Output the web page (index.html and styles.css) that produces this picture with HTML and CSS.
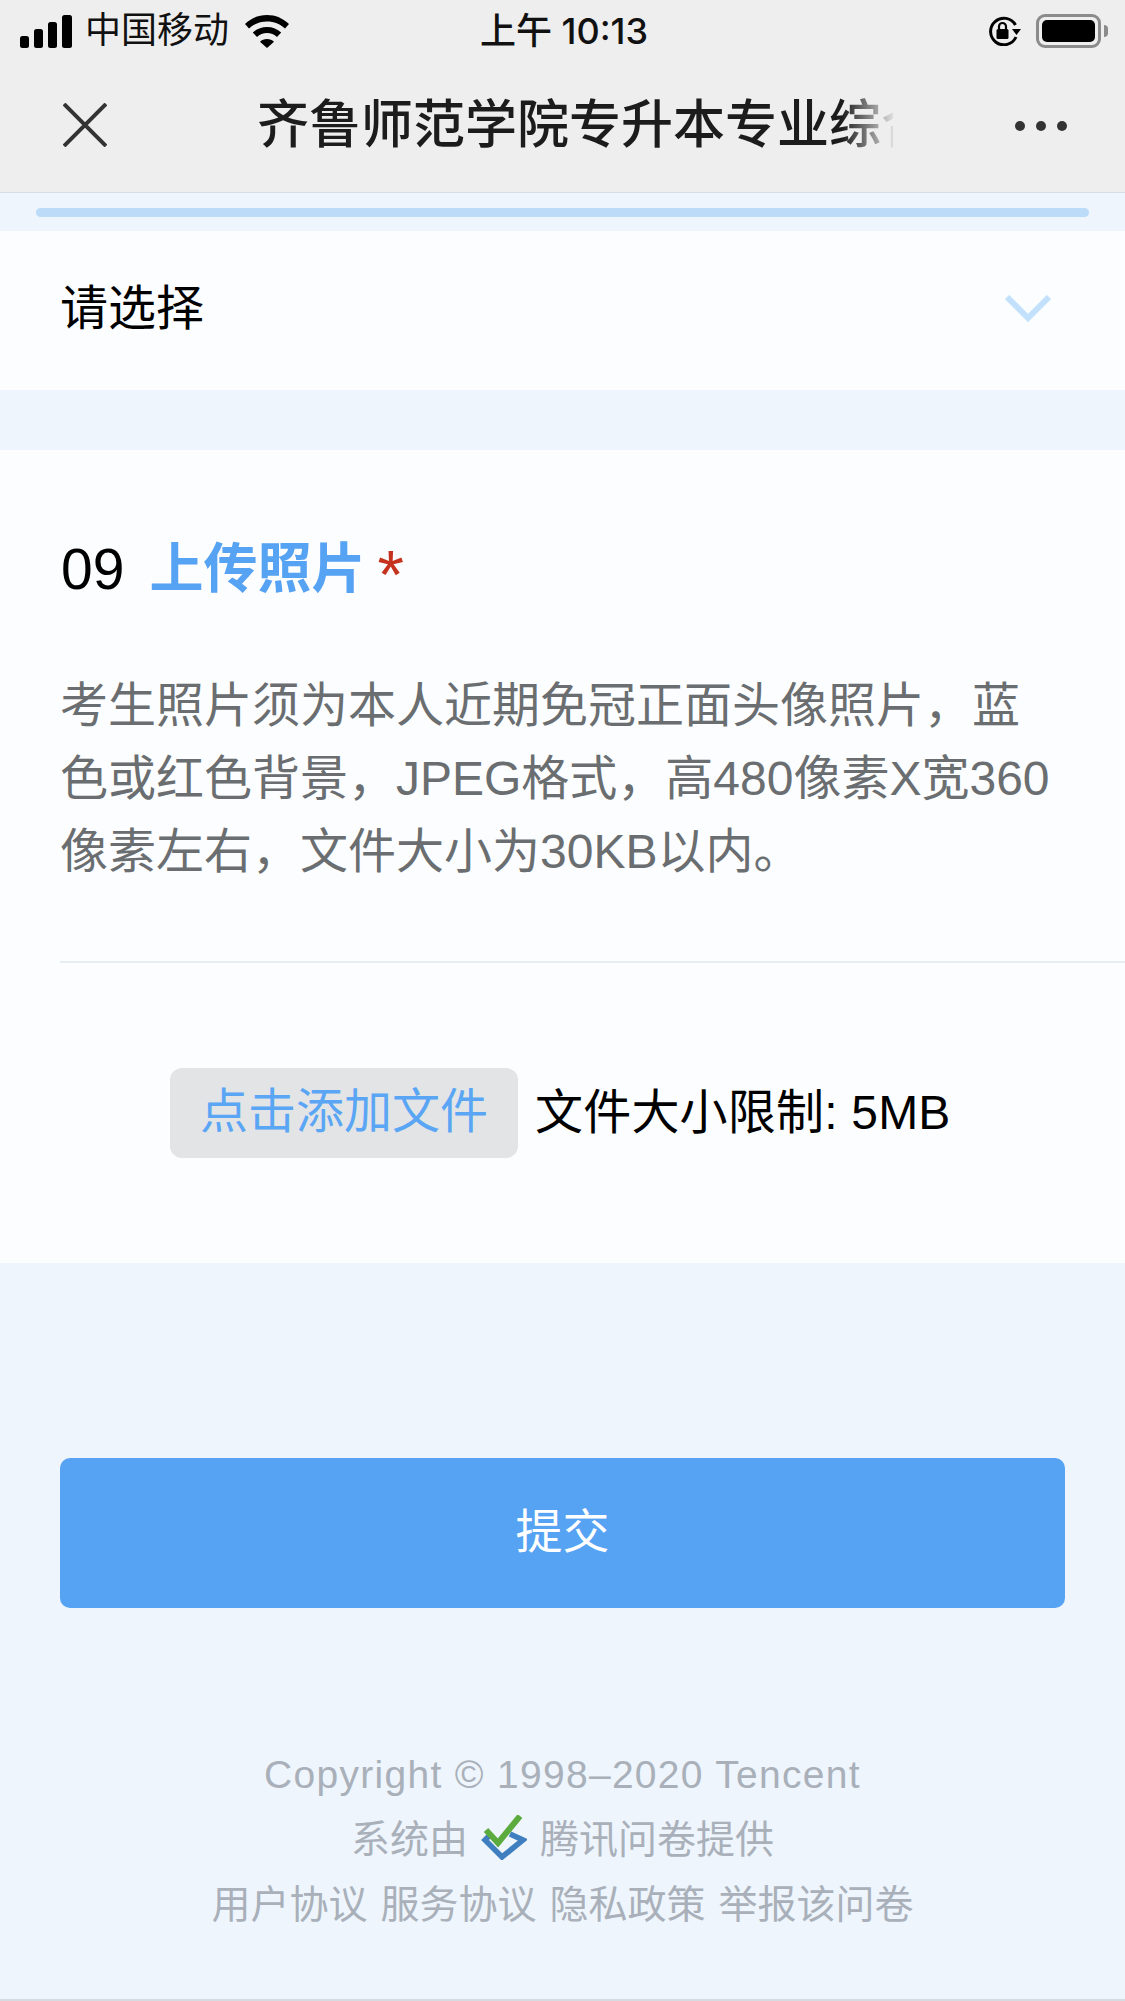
FILE: index.html
```html
<!DOCTYPE html>
<html lang="zh-CN">
<head>
<meta charset="utf-8">
<title>齐鲁师范学院专升本专业综合</title>
<link rel="stylesheet" href="styles.css">
</head>
<body>
<header class="chrome">
  <div class="status">
    <div class="status-left">
      <svg class="signal" viewBox="0 0 52 33" aria-hidden="true"><rect x="0" y="21" width="9" height="12" rx="2.5"/><rect x="14" y="14" width="9" height="19" rx="2.5"/><rect x="28" y="7" width="9" height="26" rx="2.5"/><rect x="42" y="0" width="10" height="33" rx="2.5"/></svg>
      <span class="carrier">中国移动</span>
      <svg class="wifi" viewBox="0 0 44 33" aria-hidden="true"><path d="M22 0C13.500 0 6 3.300 0 9l4 4.500C9 9 15 6.500 22 6.500S35 9 40 13.500L44 9C38 3.300 30.500 0 22 0Z"/><path d="M22 12c-5.500 0-10.500 2-14.200 5.500l4.200 4.500c2.700-2.500 6.200-4 10-4s7.300 1.500 10 4l4.200-4.500C32.500 14 27.500 12 22 12Z"/><path d="M22 24c-2.800 0-5.200 1-7 2.700L22 33l7-6.300C27.200 25 24.800 24 22 24Z"/></svg>
    </div>
    <div class="time">上午 10:13</div>
    <div class="status-right">
      <svg class="lock" viewBox="0 0 34 30" aria-hidden="true"><path class="lock-ring" d="M27.500 9A13.300 13.300 0 1 0 28 21"/><path d="M24 13h9l-4.500 6z"/><rect x="8.500" y="13" width="12" height="10" rx="1.500"/><path class="lock-hoop" d="M11 13v-2.500a3.500 3.500 0 0 1 7 0V13"/></svg>
      <div class="battery"><div class="battery-fill"></div></div>
      <div class="battery-nub"></div>
    </div>
  </div>
  <nav class="nav">
    <svg class="close" viewBox="0 0 44 44" aria-hidden="true"><path d="M1 1l42 42M43 1L1 43"/></svg>
    <div class="nav-title">齐鲁师范学院专升本专业综合</div>
    <svg class="more" viewBox="0 0 52 10" aria-hidden="true"><circle cx="5" cy="5" r="5"/><circle cx="26" cy="5" r="5"/><circle cx="47" cy="5" r="5"/></svg>
  </nav>
</header>

<div class="progress"><div class="progress-bar"></div></div>

<section class="select-row">
  <span>请选择</span>
  <svg class="chevron" viewBox="0 0 46 27" aria-hidden="true"><path d="M2 2l21 21L44 2"/></svg>
</section>

<section class="question">
  <h2 class="q-title"><span class="q-num">09</span><span class="q-name">上传照片</span><span class="q-req">*</span></h2>
  <p class="q-desc">考生照片须为本人近期免冠正面头像照片，蓝色或红色背景，JPEG格式，高480像素X宽360像素左右，文件大小为30KB以内。</p>
  <div class="q-rule"></div>
  <div class="upload">
    <div class="upload-btn">点击添加文件</div>
    <div class="upload-note">文件大小限制: 5MB</div>
  </div>
</section>

<div class="submit-wrap"><div class="submit">提交</div></div>

<footer class="footer">
  <div class="foot-line foot-copy">Copyright © 1998–2020 Tencent</div>
  <div class="foot-line foot-brand">系统由
    <svg class="logo" viewBox="0 0 46 45" aria-hidden="true"><path class="logo-blue" d="M9 20L4 25l17 17L42 25l-13-6"/><path class="logo-green" d="M5 15l12 13L39 1"/></svg>
    腾讯问卷提供</div>
  <div class="foot-line foot-links"><span>用户协议</span><span>服务协议</span><span>隐私政策</span><span>举报该问卷</span></div>
</footer>
</body>
</html>
```
FILE: styles.css
```css
* { box-sizing: border-box; }
html, body { margin: 0; padding: 0; }
body {
  width: 1125px;
  height: 2001px;
  overflow: hidden;
  background: #eef5fd;
  border-bottom: 2px solid #d5dbe1;
  font-family: "Liberation Sans", "Noto Sans CJK SC", sans-serif;
  color: #000;
}
.chrome {
  height: 193px;
  background: #eeeeee;
  border-bottom: 1px solid #d5dde5;
  color: #111;
}
.status {
  height: 62px;
  display: grid;
  grid-template-columns: 1fr auto 1fr;
  align-items: center;
  padding: 0 17px 0 20px;
}
.status-left { display: flex; align-items: center; }
.signal { width: 52px; height: 33px; fill: #000; }
.carrier { font-size: 36px; margin-left: 13px; line-height: 44px; }
.wifi { width: 44px; height: 33px; fill: #000; margin-left: 16px; }
.time { font-family: Inter, "Noto Sans CJK SC", sans-serif; font-size: 36px; font-weight: 500; line-height: 44px; }
.status-right { display: flex; align-items: center; justify-content: flex-end; }
.lock { width: 34px; height: 30px; fill: #000; margin-right: 14px; }
.lock-ring { fill: none; stroke: #000; stroke-width: 3; }
.lock-hoop { fill: none; stroke: #000; stroke-width: 2.200; }
.battery {
  width: 65px;
  height: 34px;
  border: 3px solid #8b8b8b;
  border-radius: 9px;
  padding: 3px;
}
.battery-fill { width: 100%; height: 100%; background: #000; border-radius: 5px; }
.battery-nub { width: 4px; height: 12px; margin-left: 3px; background: #8b8b8b; border-radius: 0 4px 4px 0; }
.nav {
  height: 130px;
  display: flex;
  align-items: center;
  padding: 0 58px 4px 63px;
}
.close { width: 44px; height: 44px; fill: none; stroke: #333; stroke-width: 4; flex: none; }
.nav-title {
  width: 636px;
  margin-left: 150px;
  flex: none;
  font-size: 52px;
  font-weight: 500;
  line-height: 64px;
  white-space: nowrap;
  overflow: hidden;
  color: #1c1c1c;
  -webkit-mask-image: linear-gradient(to right, #000 92%, rgba(0,0,0,.08) 100%);
  mask-image: linear-gradient(to right, #000 92%, rgba(0,0,0,.08) 100%);
}
.more { width: 52px; height: 10px; fill: #333; flex: none; margin: 2px 0 0 auto; }
.progress { height: 38px; padding: 15px 36px 0; }
.progress-bar { height: 9px; background: #bbdbf9; border-radius: 5px; }
.select-row {
  height: 159px;
  background: #fcfdff;
  display: flex;
  align-items: center;
  justify-content: space-between;
  padding: 0 74px 4px 60px;
  font-size: 48px;
  line-height: 60px;
}
.chevron { width: 46px; height: 27px; fill: none; stroke: #c4e1fb; stroke-width: 6; }
.question {
  margin-top: 60px;
  height: 813px;
  background: #fcfdff;
  padding: 87px 0 0 60px;
}
.q-title {
  margin: 0;
  display: flex;
  align-items: center;
  height: 64px;
  font-weight: 400;
  line-height: 64px;
}
.q-num { color: #000; margin: 0 25px 0 1px; font-size: 57px; }
.q-name { color: #56a2f3; font-size: 54px; font-weight: 600; }
.q-req { color: #c5331f; margin: 10px 0 0 12px; font-size: 68px; }
.q-desc {
  margin: 68px 0 0;
  width: 1000px;
  font-size: 48px;
  line-height: 73px;
  color: #6a6e70;
}
.q-rule { margin-top: 73px; height: 2px; background: #e6edf3; }
.upload { display: flex; align-items: center; margin: 105px 0 0 110px; }
.upload-btn {
  width: 348px;
  height: 90px;
  line-height: 88px;
  text-align: center;
  background: #e3e4e5;
  border-radius: 12px;
  color: #5aa6f5;
  font-size: 48px;
}
.upload-note { margin-left: 17px; font-size: 48px; line-height: 60px; letter-spacing: 0.200px; color: #000; }
.submit-wrap { padding: 195px 60px 0; }
.submit {
  height: 150px;
  line-height: 148px;
  text-align: center;
  background: #56a2f3;
  border-radius: 10px;
  color: #fff;
  font-size: 47px;
}
.footer {
  margin-top: 134px;
  text-align: center;
  color: #a9b0b9;
  font-size: 39px;
}
.foot-line { height: 65px; line-height: 65px; display: flex; justify-content: center; align-items: center; }
.foot-copy { letter-spacing: 1.300px; }
.logo { width: 46px; height: 45px; margin: -4px 13px 0; }
.logo-blue { fill: none; stroke: #3f7ebf; stroke-width: 5.500; stroke-linejoin: miter; }
.logo-green { fill: none; stroke: #5bab3f; stroke-width: 6; }
.foot-links { gap: 13px; }
```
